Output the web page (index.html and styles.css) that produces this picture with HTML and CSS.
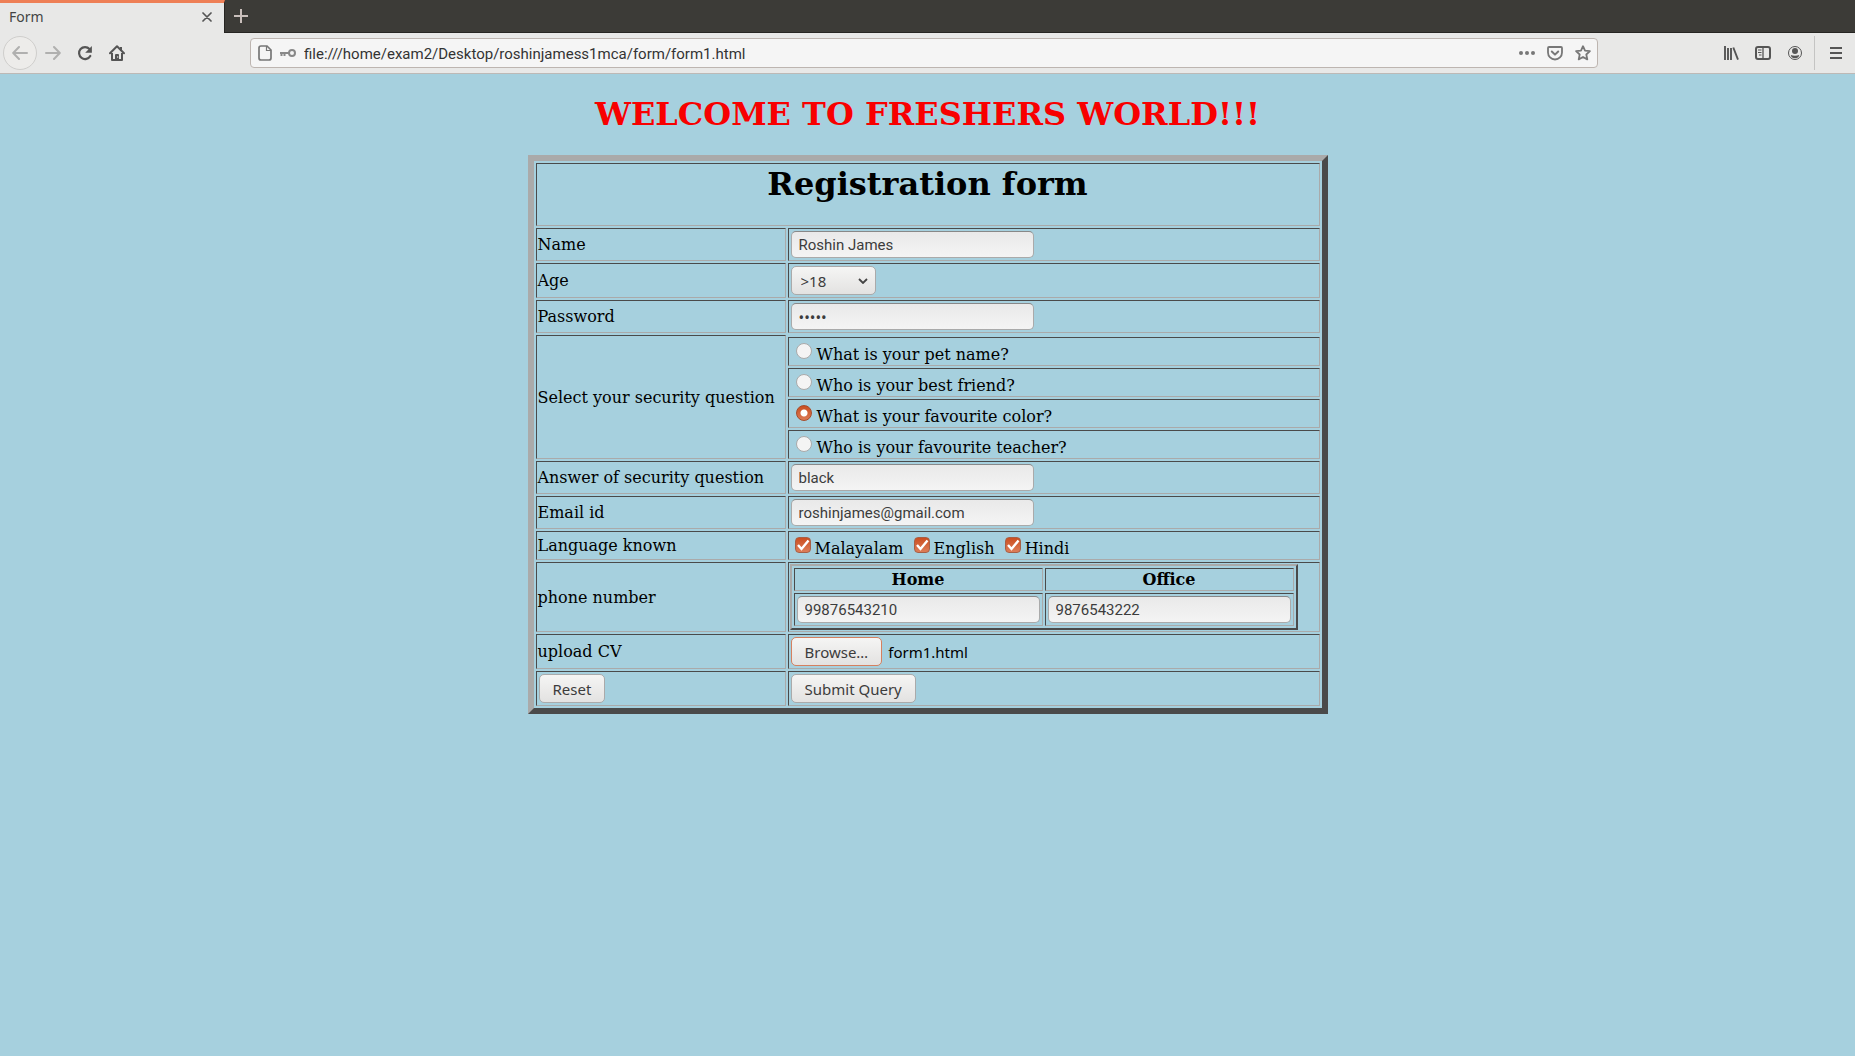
FILE: index.html
```html
<!DOCTYPE html>
<html lang="en">
<head>
<meta charset="utf-8">
<title>Form</title>
<link rel="stylesheet" href="styles.css">
</head>
<body>
<header class="browser">
  <div class="tabbar">
    <div class="tab">
      <span class="tab-title">Form</span>
      <button class="icon-btn tab-close" type="button" aria-label="Close tab"><svg width="10" height="10" viewBox="0 0 10 10"><path d="M1 1l8 8M9 1L1 9" stroke="#555" stroke-width="1.7" fill="none" stroke-linecap="round"/></svg></button>
    </div>
    <button class="icon-btn new-tab" type="button" aria-label="New tab"><svg width="14" height="14" viewBox="0 0 14 14"><path d="M7 0v14M0 7h14" stroke="#c9bfbb" stroke-width="2" fill="none"/></svg></button>
  </div>
  <nav class="toolbar" aria-label="Navigation">
    <div class="nav-buttons">
      <button class="icon-btn back" type="button" aria-label="Back"><svg width="16" height="16" viewBox="0 0 16 16"><path d="M15 8H1.500M7 2L1.200 8 7 14" stroke="#b0b0af" stroke-width="2" fill="none" stroke-linecap="round" stroke-linejoin="round"/></svg></button>
      <button class="icon-btn" type="button" aria-label="Forward"><svg width="16" height="16" viewBox="0 0 16 16"><path d="M1 8h13.500M9 2l5.800 6L9 14" stroke="#b0b0af" stroke-width="2" fill="none" stroke-linecap="round" stroke-linejoin="round"/></svg></button>
      <button class="icon-btn" type="button" aria-label="Reload"><svg width="16" height="16" viewBox="0 0 16 16"><path d="M13.300 11A6 6 0 1 1 12.500 4" stroke="#555" stroke-width="2.200" fill="none" stroke-linecap="round"/><path d="M14.900 1v6.700H8.200z" fill="#555"/></svg></button>
      <button class="icon-btn" type="button" aria-label="Home"><svg width="16" height="16" viewBox="0 0 16 16"><path d="M1 8.300L8 1.300l7 7" stroke="#555" stroke-width="2" fill="none" stroke-linecap="round" stroke-linejoin="round"/><path d="M3 8v7h10V8" stroke="#555" stroke-width="2" fill="none" stroke-linejoin="round"/><path d="M6 15v-5q0-1 1-1h2q1 0 1 1v5z" fill="#555"/><path d="M11 2h2v4h-2z" fill="#555"/><circle cx="8.700" cy="12" r=".7" fill="#e8e8e7"/></svg></button>
    </div>
    <div class="urlbar">
      <svg class="page-icon" width="14" height="16" viewBox="0 0 14 16"><path d="M3 1h6l4 4v8q0 2-2 2H3q-2 0-2-2V3q0-2 2-2z" stroke="#777" stroke-width="1.700" fill="none"/><path d="M8.500 1v4.500H13" stroke="#777" stroke-width="1.200" fill="none"/></svg>
      <svg width="16" height="10" viewBox="0 0 16 10"><circle cx="12" cy="5" r="3" stroke="#888" stroke-width="2" fill="none"/><path d="M9 5H0M1.500 5v3M4.500 5v3" stroke="#888" stroke-width="2" fill="none"/></svg>
      <input class="url" type="text" aria-label="Address" value="file:///home/exam2/Desktop/roshinjamess1mca/form/form1.html">
      <div class="url-actions">
        <button class="icon-btn" type="button" aria-label="Page actions"><svg width="16" height="16" viewBox="0 0 16 16" fill="#777"><circle cx="2" cy="8" r="2"/><circle cx="8" cy="8" r="2"/><circle cx="14" cy="8" r="2"/></svg></button>
        <button class="icon-btn" type="button" aria-label="Save to Pocket"><svg width="16" height="16" viewBox="0 0 16 16"><path d="M2 2h12q1 0 1 1v4.500a7 7 0 0 1-14 0V3q0-1 1-1z" stroke="#777" stroke-width="1.800" fill="none"/><path d="M4.800 6.500L8 9.600l3.200-3.100" stroke="#777" stroke-width="2" fill="none" stroke-linecap="round" stroke-linejoin="round"/></svg></button>
        <button class="icon-btn" type="button" aria-label="Bookmark"><svg width="16" height="16" viewBox="0 0 16 16"><path d="M8 1.200l2 4.500 4.900.5-3.600 3.300 1 4.900L8 12l-4.300 2.400 1-4.900L1.100 6.200 6 5.700z" stroke="#777" stroke-width="1.800" fill="none" stroke-linejoin="round"/></svg></button>
      </div>
    </div>
    <div class="tools">
      <button class="icon-btn" type="button" aria-label="Library"><svg width="16" height="16" viewBox="0 0 16 16"><path d="M2 1v14M5 3v12M8 3v12M10.300 2.500L15 14.700" stroke="#555" stroke-width="1.900" fill="none"/></svg></button>
      <button class="icon-btn" type="button" aria-label="Sidebars"><svg width="16" height="16" viewBox="0 0 16 16"><rect x="1" y="2" width="14" height="12" rx="2" stroke="#555" stroke-width="2" fill="none"/><path d="M8 2v12" stroke="#555" stroke-width="1.300"/><path d="M3 5h3.500M3 7.500h3.500M4 10h2.500" stroke="#555" stroke-width="1"/></svg></button>
      <button class="icon-btn" type="button" aria-label="Account"><svg width="16" height="16" viewBox="0 0 16 16"><circle cx="8" cy="8" r="6.500" stroke="#555" stroke-width="1" fill="none"/><circle cx="8" cy="6" r="3" fill="#555"/><path d="M3.800 10q2 .8 4.200.8t4.200-.8q-.5 3.200-4.200 3.200T3.800 10z" fill="#555"/></svg></button>
    </div>
    <button class="icon-btn menu" type="button" aria-label="Menu"><svg width="12" height="12" viewBox="0 0 12 12"><path d="M0 1h12M0 6h12M0 11h12" stroke="#555" stroke-width="2"/></svg></button>
  </nav>
</header>
<main class="page">
  <h1 class="welcome">WELCOME TO FRESHERS WORLD!!!</h1>
  <form>
    <table class="form-table">
      <colgroup><col class="col-label"><col></colgroup>
      <tr><th colspan="2" class="title-cell"><h1 class="title">Registration form</h1></th></tr>
      <tr><td><label for="name">Name</label></td><td><input class="field" id="name" type="text" value="Roshin James"></td></tr>
      <tr><td><label for="age">Age</label></td><td><span class="select-wrap"><select id="age" class="control select"><option>&gt;18</option><option>&lt;18</option></select><svg class="chevron" width="10" height="6" viewBox="0 0 10 6"><path d="M1 1l4 4 4-4" stroke="#444" stroke-width="1.800" fill="none"/></svg></span></td></tr>
      <tr><td><label for="password">Password</label></td><td><input class="field" id="password" type="password" value="12345"></td></tr>
      <tr><td rowspan="5">Select your security question</td></tr>
      <tr><td class="choices"><input type="radio" name="question" id="q1"><label for="q1">What is your pet name?</label></td></tr>
      <tr><td class="choices"><input type="radio" name="question" id="q2"><label for="q2">Who is your best friend?</label></td></tr>
      <tr><td class="choices"><input type="radio" name="question" id="q3" checked><label for="q3">What is your favourite color?</label></td></tr>
      <tr><td class="choices"><input type="radio" name="question" id="q4"><label for="q4">Who is your favourite teacher?</label></td></tr>
      <tr><td><label for="answer">Answer of security question</label></td><td><input class="field" id="answer" type="text" value="black"></td></tr>
      <tr><td><label for="email">Email id</label></td><td><input class="field" id="email" type="text" value="roshinjames@gmail.com"></td></tr>
      <tr><td>Language known</td><td class="choices"><input type="checkbox" id="l1" checked><label for="l1">Malayalam</label> <input type="checkbox" id="l2" checked><label for="l2">English</label> <input type="checkbox" id="l3" checked><label for="l3">Hindi</label></td></tr>
      <tr><td>phone number</td><td>
        <table class="phone-table">
          <tr><th><label for="home">Home</label></th><th><label for="office">Office</label></th></tr>
          <tr><td><input class="field" id="home" type="text" value="99876543210"></td><td><input class="field" id="office" type="text" value="9876543222"></td></tr>
        </table>
      </td></tr>
      <tr><td><label for="cv">upload CV</label></td><td><div class="upload"><button class="control browse" id="browse" type="button">Browse…</button><output class="file-name" id="file-name">form1.html</output><input id="cv" type="file" hidden></div></td></tr>
      <tr><td><button class="control" type="reset">Reset</button></td><td><button class="control" type="submit">Submit Query</button></td></tr>
    </table>
  </form>
</main>
<script src="script.js"></script>
</body>
</html>
```
FILE: styles.css
```css
* { box-sizing: border-box; }
body {
  margin: 0;
  background: #a6d0de;
  color: #000;
  font: 16px/19px "DejaVu Serif", serif;
}
svg { display: block; flex: none; }

/* browser frame */
.browser { font-family: "Noto Sans", sans-serif; color: #444; }
.tabbar {
  display: flex;
  height: 33px;
  background: #3c3b37;
  border-bottom: 1px solid #262522;
}
.tab {
  display: flex;
  align-items: center;
  justify-content: space-between;
  width: 225px;
  height: 33px;
  padding: 0 12px 3px 9px;
  background: #e8e8e7;
  border-top: 3px solid #ee7f56;
  border-right: 1px solid #262522;
  font-size: 14px;
}
.icon-btn {
  display: flex;
  align-items: center;
  justify-content: center;
  flex: none;
  padding: 0;
  border: 0;
  background: none;
}
.new-tab { width: 32px; }
.toolbar {
  display: flex;
  align-items: center;
  height: 41px;
  background: #e8e8e7;
  border-bottom: 1px solid #bdb9b6;
}
.nav-buttons { display: flex; align-items: center; gap: 16px; padding-left: 3px; margin-right: auto; }
.nav-buttons .back {
  width: 34px;
  height: 34px;
  margin-right: -8px;
  border: 1px solid #cfcecc;
  border-radius: 50%;
  background: #edecea;
}
.urlbar {
  display: flex;
  align-items: center;
  gap: 8px;
  flex: none;
  width: calc(100% - 507px);
  height: 30px;
  padding: 0 6px 0 7px;
  background: #f5f5f5;
  border: 1px solid #bdb5b0;
  border-radius: 4px;
}
.url {
  flex: 1;
  min-width: 0;
  padding: 1px 0 0;
  border: 0;
  outline: 0;
  background: none;
  color: #333;
  font: 15px/20px Roboto, "Noto Sans", sans-serif;
}
.url-actions { display: flex; gap: 12px; }
.tools { display: flex; gap: 16px; margin-left: auto; padding-right: 11px; }
.menu { width: 41px; height: 34px; padding-left: 2px; border-left: 1px solid #c4c4c3; }

/* page */
.page { padding: 21px 8px 0; }
.welcome, .title {
  font: bold 32px/38px "DejaVu Serif", serif;
  text-align: center;
}
.welcome { margin: 0 0 22px; color: #f80000; }
.title { margin: 0 0 21px; }
.form-table {
  width: 800px;
  max-width: 100%;
  margin: 0 auto;
  border: 6px solid;
  border-color: #aaa #4a4a4a #4a4a4a #aaa;
  border-spacing: 2px;
}
.col-label { width: 250px; }
td, th {
  padding: 1px;
  border: 1px solid;
  border-color: #4a4a4a #aaa #aaa #4a4a4a;
  text-align: left;
}
.field, .control {
  display: block;
  margin: 1px;
  border: 1px solid #aaa;
  border-radius: 5px;
  color: #3c3c3c;
  font: 15px/20px Roboto, "Noto Sans", sans-serif;
}
.field {
  width: 243px;
  height: 27px;
  padding: 0 7px;
  border-top-color: #888;
  background: linear-gradient(#e9e9e9, #f4f4f4);
}
.field[type="password"] { font-family: "Noto Sans", sans-serif; }
.control {
  height: 29px;
  padding: 0 13px;
  background: linear-gradient(#f5f5f4, #e3e2e1);
  font-family: "Noto Sans", sans-serif;
}
.select-wrap { display: grid; width: 87px; align-items: center; }
.select { grid-area: 1 / 1; width: 85px; padding: 0 9px; appearance: none; }
.chevron { grid-area: 1 / 1; justify-self: end; margin-right: 9px; pointer-events: none; }
.choices { height: 29px; padding-top: 4px; }
.choices input {
  appearance: none;
  width: 16px;
  height: 16px;
  margin: 0 5px 0 6px;
  vertical-align: 1px;
  border: 1px solid #aaa;
  background: #f4f4f4;
}
.choices input[type="radio"] { border-radius: 50%; }
.choices input[type="radio"]:checked {
  border-color: #a84a28;
  background: radial-gradient(circle, #fff 3px, transparent 4px), linear-gradient(#c94f20, #dc7a55);
}
.choices input[type="checkbox"] {
  margin: 0 4px 0 5px;
  border-color: #a85f45;
  border-radius: 4px;
  background: url("data:image/svg+xml,%3Csvg xmlns='http://www.w3.org/2000/svg' viewBox='0 0 14 14'%3E%3Cpath d='M2 7l3.500 4L12.500 2.500' stroke='white' stroke-width='2.400' fill='none'/%3E%3C/svg%3E"), linear-gradient(#cb4e20, #dd7d58);
}
.phone-table {
  border: 2px solid;
  border-color: #aaa #4a4a4a #4a4a4a #aaa;
  border-spacing: 2px;
}
.phone-table th { text-align: center; }
.upload { display: flex; align-items: center; gap: 5px; }
.browse { border-color: #d5805f; }
.file-name { font: 15px/20px "Noto Sans", sans-serif; }
```
FILE: script.js
```js
const picker = document.getElementById("cv");
document.getElementById("browse").addEventListener("click", () => picker.click());
picker.addEventListener("change", () => {
  if (picker.files.length) {
    document.getElementById("file-name").textContent = picker.files[0].name;
  }
});
```
